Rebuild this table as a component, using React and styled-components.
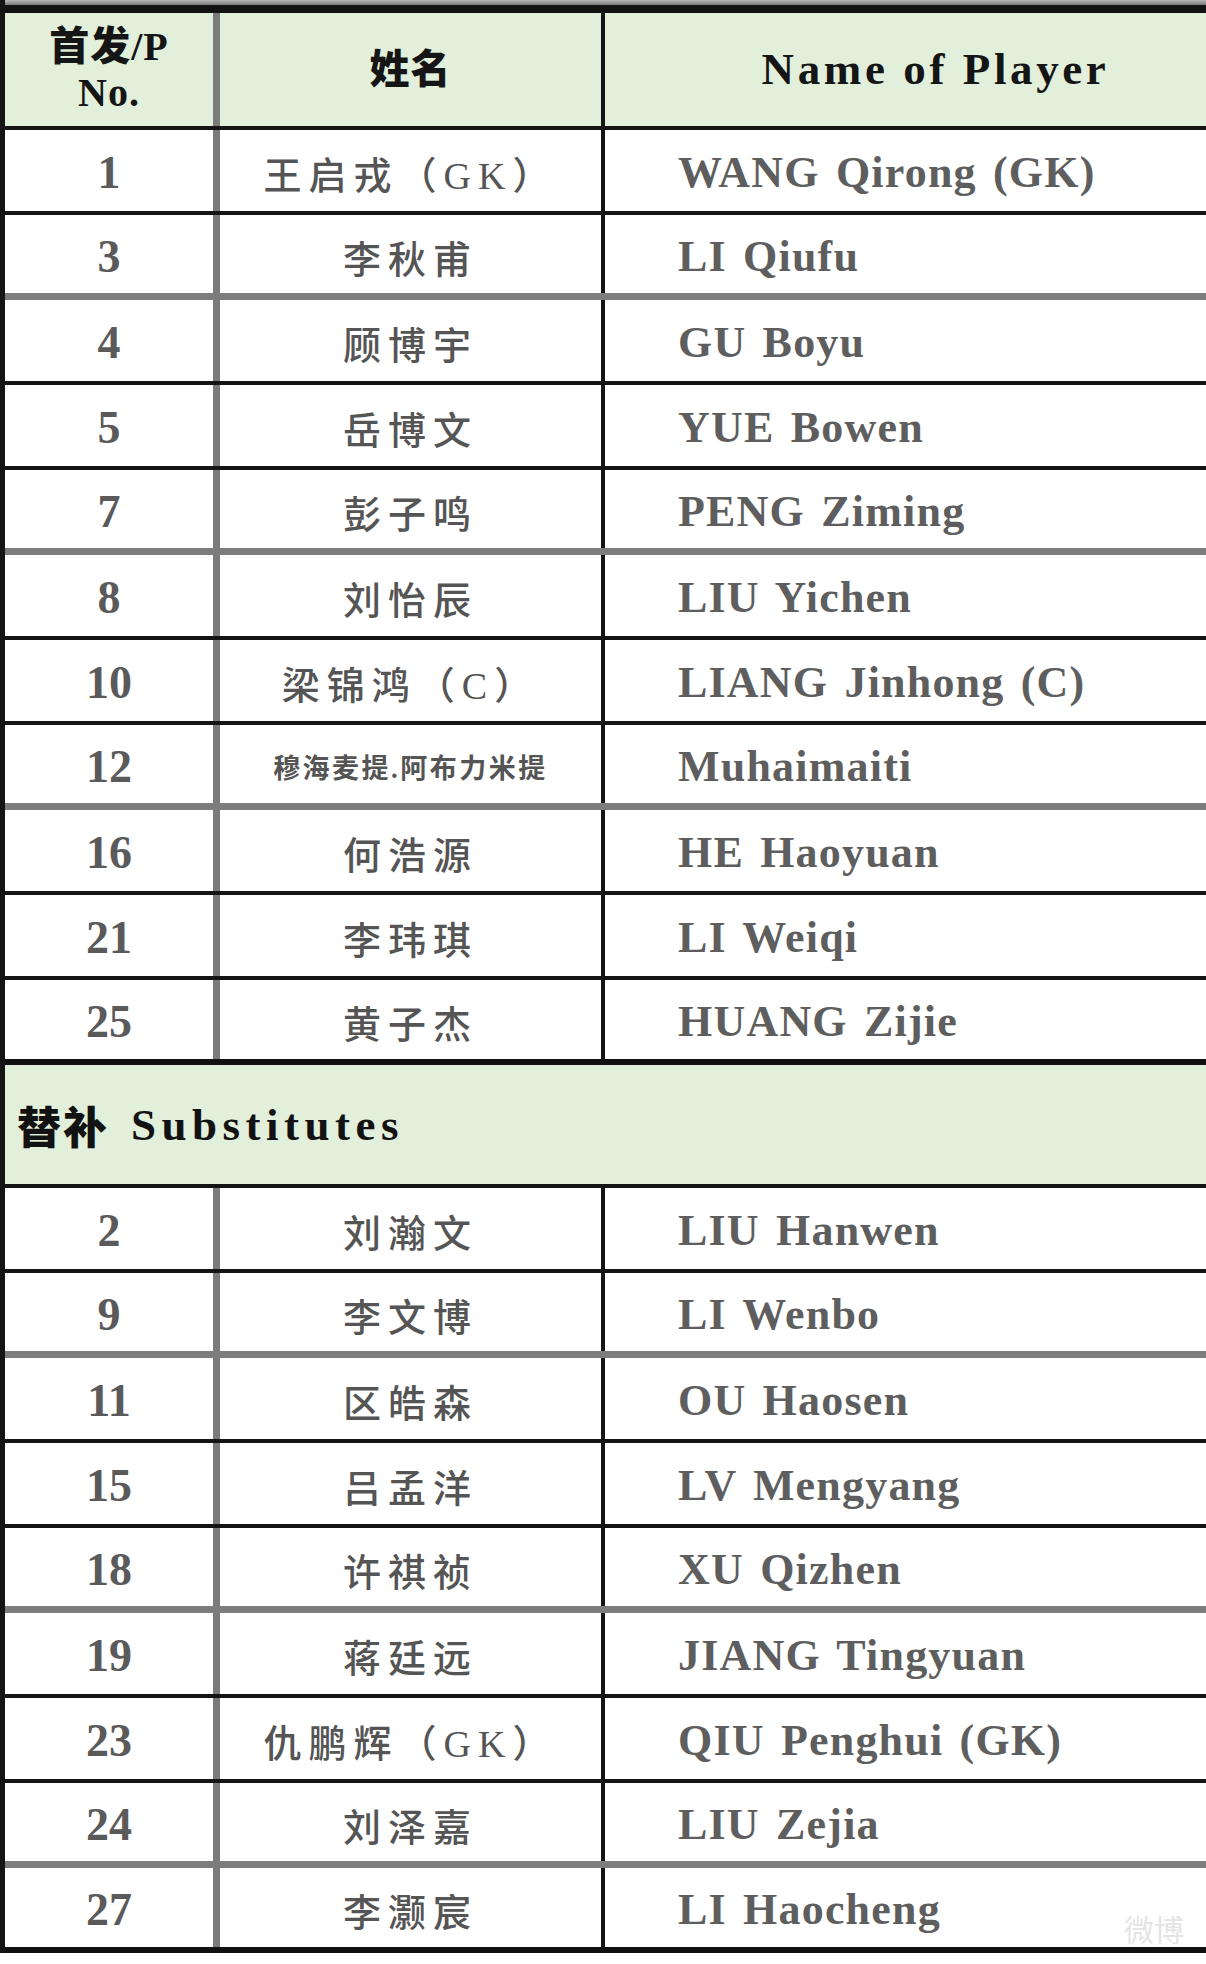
import React from "react";
import styled, { createGlobalStyle } from "styled-components";

const GlobalStyle = createGlobalStyle`
  html, body {
    margin: 0;
    padding: 0;
    background: #ffffff;
  }
  body {
    width: 1206px;
    height: 1964px;
    overflow: hidden;
  }
`;

// 首发名单
const starters = [
  { no: "1", cn: "王启戎（GK）", en: "WANG Qirong (GK)" },
  { no: "3", cn: "李秋甫", en: "LI Qiufu" },
  { no: "4", cn: "顾博宇", en: "GU Boyu" },
  { no: "5", cn: "岳博文", en: "YUE Bowen" },
  { no: "7", cn: "彭子鸣", en: "PENG Ziming" },
  { no: "8", cn: "刘怡辰", en: "LIU Yichen" },
  { no: "10", cn: "梁锦鸿（C）", en: "LIANG Jinhong (C)" },
  { no: "12", cn: "穆海麦提.阿布力米提", en: "Muhaimaiti", small: true },
  { no: "16", cn: "何浩源", en: "HE Haoyuan" },
  { no: "21", cn: "李玮琪", en: "LI Weiqi" },
  { no: "25", cn: "黄子杰", en: "HUANG Zijie" },
];

// 替补名单
const substitutes = [
  { no: "2", cn: "刘瀚文", en: "LIU Hanwen" },
  { no: "9", cn: "李文博", en: "LI Wenbo" },
  { no: "11", cn: "区皓森", en: "OU Haosen" },
  { no: "15", cn: "吕孟洋", en: "LV Mengyang" },
  { no: "18", cn: "许祺祯", en: "XU Qizhen" },
  { no: "19", cn: "蒋廷远", en: "JIANG Tingyuan" },
  { no: "23", cn: "仇鹏辉（GK）", en: "QIU Penghui (GK)" },
  { no: "24", cn: "刘泽嘉", en: "LIU Zejia" },
  { no: "27", cn: "李灏宸", en: "LI Haocheng" },
];

// every third rule in the scan comes out as a thick grey line
const lineFor = (i, last) => {
  if (last) return "heavy";
  return i % 3 === 1 ? "grey" : "black";
};

function PlayerRows({ players }) {
  return players.map((p, i) => (
    <Row key={p.no} $line={lineFor(i, i === players.length - 1)}>
      <NumCell>{p.no}</NumCell>
      <CnCell $small={p.small}>{p.cn}</CnCell>
      <EnCell>{p.en}</EnCell>
    </Row>
  ));
}

export default function App() {
  return (
    <>
      <GlobalStyle />
      <Sheet>
        <TopBand />
        <HeaderRow>
          <HeadCell>
            <span>首发/P</span>
            <span>No.</span>
          </HeadCell>
          <HeadCell $divider="cn">姓名</HeadCell>
          <HeadCell $divider="none" $en>Name of Player</HeadCell>
        </HeaderRow>

        <PlayerRows players={starters} />

        <SectionRow>
          <SectionCn>替补</SectionCn>
          <span>Substitutes</span>
        </SectionRow>

        <PlayerRows players={substitutes} />
      </Sheet>
      <Watermark>微博</Watermark>
    </>
  );
}

const serif = '"Liberation Serif", "Noto Sans CJK SC", serif';

const Sheet = styled.div`
  width: 1206px;
  border-left: 5px solid #141414;
  box-sizing: border-box;
  display: flex;
  flex-direction: column;
`;

const TopBand = styled.div`
  height: 5px;
  background: linear-gradient(#b8b8b8, #7a7a7a);
`;

const lines = {
  black: "4px solid #151515",
  grey: "7px solid #7d7d7d",
  heavy: "6px solid #111111",
};

const Row = styled.div`
  display: grid;
  grid-template-columns: 215px 385px 1fr;
  height: 85px;
  box-sizing: border-box;
  border-bottom: ${(p) => lines[p.$line] || lines.black};
  background: #ffffff;
`;

const HeaderRow = styled(Row)`
  height: 125px;
  border-top: 8px solid #121212;
  border-bottom: 4px solid #151515;
  background: #e2efda;
`;

const Cell = styled.div`
  display: flex;
  align-items: center;
  justify-content: center;
  box-sizing: border-box;
  padding-top: 4px;
  overflow: hidden;
  white-space: pre;
`;

const NumCell = styled(Cell)`
  border-right: 7px solid #7b7b7b;
  font-family: ${serif};
  font-size: 46px;
  font-weight: 700;
  color: #5a5a5a;
`;

const CnCell = styled(Cell)`
  border-right: 4px solid #141414;
  font-family: ${serif};
  font-size: ${(p) => (p.$small ? "27px" : "38px")};
  letter-spacing: ${(p) => (p.$small ? "2.5px" : "7px")};
  font-weight: ${(p) => (p.$small ? 700 : 500)};
  color: #555555;
`;

const EnCell = styled(Cell)`
  justify-content: flex-start;
  padding-left: 73px;
  font-family: ${serif};
  font-size: 44px;
  letter-spacing: 1.2px;
  word-spacing: 4px;
  font-weight: 700;
  color: #5e5e5e;
`;

const HeadCell = styled(Cell)`
  flex-direction: column;
  gap: 4px;
  padding-top: 0;
  border-right: ${(p) =>
    p.$divider === "none"
      ? "none"
      : p.$divider === "cn"
      ? "4px solid #141414"
      : "7px solid #7b7b7b"};
  padding-left: ${(p) => (p.$en ? "60px" : "0")};
  font-family: ${serif};
  font-size: ${(p) => (p.$en ? "45px" : "40px")};
  letter-spacing: ${(p) => (p.$en ? "3.6px" : "1px")};
  font-weight: 900;
  color: #151515;
  line-height: 1.05;
`;

const SectionRow = styled.div`
  height: 123px;
  box-sizing: border-box;
  border-bottom: 4px solid #151515;
  background: #e2efda;
  display: flex;
  align-items: center;
  gap: 22px;
  padding-left: 12px;
  font-family: ${serif};
  font-size: 45px;
  letter-spacing: 5.5px;
  font-weight: 900;
  color: #121212;
  white-space: nowrap;
`;

const SectionCn = styled.span`
  font-size: 44px;
  letter-spacing: 2px;
`;

const Watermark = styled.div`
  position: absolute;
  right: 22px;
  bottom: 14px;
  font-family: "Noto Sans CJK SC", sans-serif;
  font-size: 30px;
  color: rgba(210, 210, 210, 0.6);
`;
